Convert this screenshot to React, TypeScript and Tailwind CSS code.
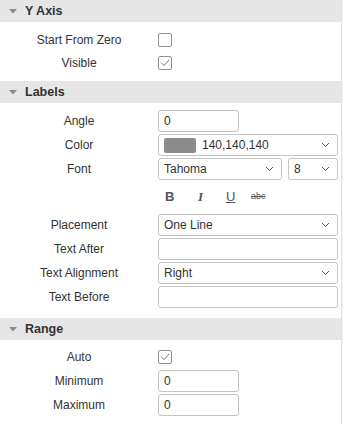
import type { ReactNode } from "react";

function Caret() {
  return (
    <svg width="8" height="5" viewBox="0 0 8 5" className="shrink-0">
      <path d="M0 0 L8 0 L4 4.5 Z" fill="#8a8a8a" />
    </svg>
  );
}

function Chevron() {
  return (
    <svg width="9" height="6" viewBox="0 0 9 6" className="shrink-0">
      <path d="M1 1 L4.5 4.5 L8 1" fill="none" stroke="#555" strokeWidth="1" />
    </svg>
  );
}

function SectionHeader({ title }: { title: string }) {
  return (
    <div className="flex h-[22px] items-center gap-[8px] bg-[#e6e6e6] pl-[9px]">
      <Caret />
      <span className="text-[12.5px] font-bold text-[#333]">{title}</span>
    </div>
  );
}

function cn(...c: string[]) {
  return c.join(" ");
}

function Row({ label, children, h = "h-[24px]" }: { label: string; children: ReactNode; h?: string }) {
  return (
    <div className={cn(h, "flex items-center")}>
      <div className="w-[158px] shrink-0 text-center text-[12px] text-[#333]">{label}</div>
      <div className="flex min-w-0 flex-1 items-center pr-[3px]">{children}</div>
    </div>
  );
}

function Checkbox({ checked }: { checked?: boolean }) {
  return (
    <div className="flex h-[14px] w-[14px] items-center justify-center rounded-[2px] border border-[#8f8f8f] bg-white">
      {checked && (
        <svg width="10" height="8" viewBox="0 0 10 8">
          <path d="M1 3.5 L4 6.5 L9 1" fill="none" stroke="#777" strokeWidth="1" />
        </svg>
      )}
    </div>
  );
}

function Input({ value = "", w = "w-full" }: { value?: string; w?: string }) {
  return (
    <div className={cn(w, "flex h-[22px] items-center rounded-[3px] border border-[#c4c4c4] bg-white px-[5px] text-[12px] text-[#333]")}>
      {value}
    </div>
  );
}

function Select({ children, w = "w-full" }: { children: ReactNode; w?: string }) {
  return (
    <div className={cn(w, "flex h-[22px] items-center justify-between rounded-[3px] border border-[#c4c4c4] bg-white pl-[5px] pr-[7px] text-[12px] text-[#333]")}>
      <div className="flex items-center">{children}</div>
      <Chevron />
    </div>
  );
}

export default function App() {
  return (
    <div className="flex h-[424px] w-[343px] bg-white" style={{ fontFamily: '"Liberation Sans", Arial, sans-serif' }}>
      <div className="w-[341px]">
        <SectionHeader title="Y Axis" />
        <div className="pb-[7px] pt-[6px]">
          <Row label="Start From Zero" h="h-[23px]">
            <Checkbox />
          </Row>
          <Row label="Visible" h="h-[23px]">
            <Checkbox checked />
          </Row>
        </div>

        <SectionHeader title="Labels" />
        <div className="pb-[9px] pt-[6px]">
          <Row label="Angle">
            <Input value="0" w="w-[81px]" />
          </Row>
          <Row label="Color">
            <Select>
              <span className="mr-[6px] h-[15px] w-[32px] rounded-[2px] bg-[#8c8c8c]" />
              140,140,140
            </Select>
          </Row>
          <Row label="Font">
            <div className="flex w-full gap-[6px]">
              <Select w="w-[124px]">Tahoma</Select>
              <Select w="w-[50px]">8</Select>
            </div>
          </Row>
          <Row label="" h="h-[32px]">
            <div className="flex items-center pl-[7px] text-[13px] text-[#555]">
              <span className="w-[30px] font-bold">B</span>
              <span className="w-[30px] pl-[3px] font-bold italic" style={{ fontFamily: '"Liberation Serif", serif' }}>I</span>
              <span className="w-[26px] pl-[1px] underline">U</span>
              <span className="text-[9px] line-through">abc</span>
            </div>
          </Row>
          <Row label="Placement">
            <Select>One Line</Select>
          </Row>
          <Row label="Text After">
            <Input />
          </Row>
          <Row label="Text Alignment">
            <Select>Right</Select>
          </Row>
          <Row label="Text Before">
            <Input />
          </Row>
        </div>

        <SectionHeader title="Range" />
        <div className="pt-[5px]">
          <Row label="Auto">
            <Checkbox checked />
          </Row>
          <Row label="Minimum">
            <Input value="0" w="w-[81px]" />
          </Row>
          <Row label="Maximum">
            <Input value="0" w="w-[81px]" />
          </Row>
        </div>
      </div>
      <div className="w-[2px] border-l border-[#e3e3e3] bg-[#f3f3f3]" />
    </div>
  );
}
